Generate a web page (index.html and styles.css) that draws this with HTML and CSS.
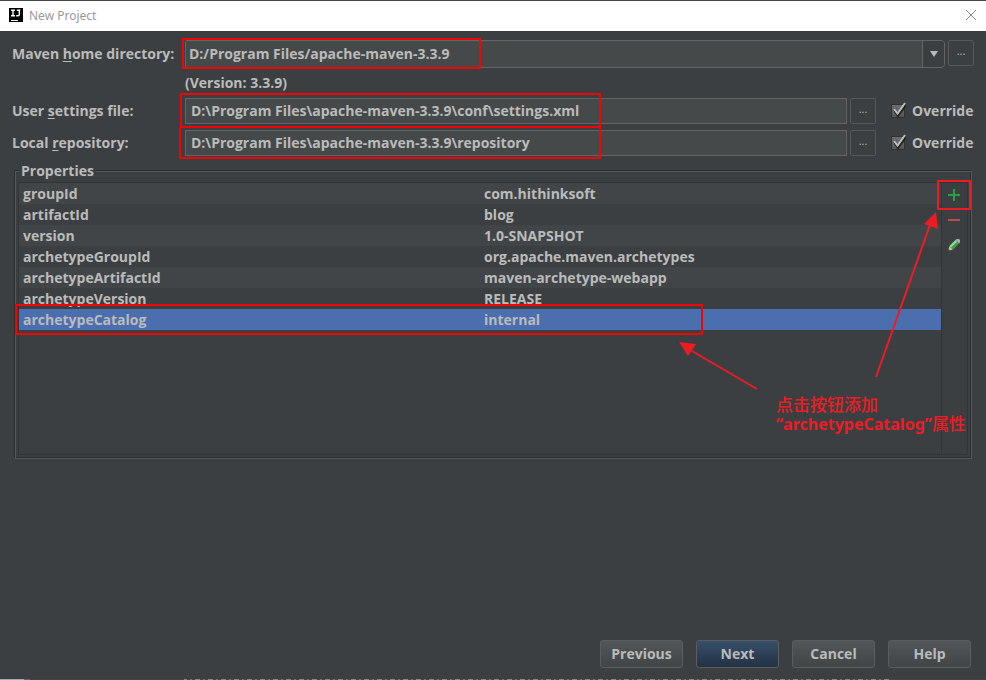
FILE: index.html
```html
<!DOCTYPE html>
<html lang="en">
<head>
<meta charset="utf-8">
<title>New Project</title>
<link rel="stylesheet" href="styles.css">
</head>
<body>
<div class="backdrop-top"></div>
<header class="titlebar">
  <svg class="logo" viewBox="0 0 14 14" width="14" height="14" aria-hidden="true">
    <path fill="#000" d="M0 0h14v14H0z"/>
    <path fill="none" stroke="#fff" stroke-width="1.4" d="M2 2.200h4M4 2v6M2 7.800h4M7.800 2.200h3.500M10.300 2v4.400q0 1.400-1.500 1.400H7.200"/>
    <path fill="#fff" d="M2 12h7v1H2z"/>
  </svg>
  <h1 class="title">New Project</h1>
  <button class="close" type="button" aria-label="Close">
    <svg viewBox="0 0 10 10" width="10" height="10"><path fill="none" stroke="#8a8a8a" d="M0 0l10 10M10 0L0 10"/></svg>
  </button>
</header>
<main class="dialog">
  <div class="form">
    <div class="row row-home">
      <label class="label" for="home">Maven <u>h</u>ome directory:</label>
      <div class="field marked mark-home">
        <select class="combo" id="home"><option>D:/Program Files/apache-maven-3.3.9</option></select>
        <span class="combo-arrow" aria-hidden="true"><svg viewBox="0 0 8 6" width="8" height="6"><path fill="#bbb" d="M0 0h8L4 6z"/></svg></span>
      </div>
      <button class="browse" type="button" aria-label="Browse home directory">...</button>
    </div>
    <p class="version">(Version: 3.3.9)</p>
    <div class="row">
      <label class="label" for="settings">User <u>s</u>ettings file:</label>
      <div class="field marked mark-settings"><input class="text" id="settings" type="text" value="D:\Program Files\apache-maven-3.3.9\conf\settings.xml"></div>
      <button class="browse" type="button" aria-label="Browse settings file">...</button>
      <label class="override"><input class="check" type="checkbox" checked><svg class="tick" viewBox="0 0 15 16" width="15" height="16" aria-hidden="true"><path fill="none" stroke="#222" stroke-width="2" d="M3 8l4 6 8-11"/><path fill="none" stroke="#bbb" stroke-width="2" d="M3 7l3.500 4.500L14 1"/></svg>Override</label>
    </div>
    <div class="row">
      <label class="label" for="repo">Local <u>r</u>epository:</label>
      <div class="field marked mark-repo"><input class="text" id="repo" type="text" value="D:\Program Files\apache-maven-3.3.9\repository"></div>
      <button class="browse" type="button" aria-label="Browse repository">...</button>
      <label class="override"><input class="check" type="checkbox" checked><svg class="tick" viewBox="0 0 15 16" width="15" height="16" aria-hidden="true"><path fill="none" stroke="#222" stroke-width="2" d="M3 8l4 6 8-11"/><path fill="none" stroke="#bbb" stroke-width="2" d="M3 7l3.500 4.500L14 1"/></svg>Override</label>
    </div>
  </div>
  <fieldset class="properties">
    <legend>Properties</legend>
    <div class="panel">
      <div class="list">
        <table class="table">
          <tbody>
            <tr><td>groupId</td><td>com.hithinksoft</td></tr>
            <tr><td>artifactId</td><td>blog</td></tr>
            <tr><td>version</td><td>1.0-SNAPSHOT</td></tr>
            <tr><td>archetypeGroupId</td><td>org.apache.maven.archetypes</td></tr>
            <tr><td>archetypeArtifactId</td><td>maven-archetype-webapp</td></tr>
            <tr><td>archetypeVersion</td><td>RELEASE</td></tr>
            <tr class="selected"><td>archetypeCatalog</td><td>internal</td></tr>
          </tbody>
        </table>
        <div class="mark-row"></div>
      </div>
      <div class="tools">
        <button class="tool tool-add" type="button" aria-label="Add"><svg viewBox="0 0 12 12" width="12" height="12"><path fill="#29a046" d="M5 0h2v5h5v2H7v5H5V7H0V5h5z"/></svg></button>
        <button class="tool" type="button" aria-label="Remove"><svg viewBox="0 0 12 12" width="12" height="12"><path fill="#bf4f43" d="M0 5h12v2H0z"/></svg></button>
        <button class="tool" type="button" aria-label="Edit"><svg viewBox="0 0 12 12" width="12" height="12"><path fill="#dfb67a" d="M0 12l1.500-5L5 10.500z"/><path fill="#333" d="M0 12l.6-2 1.400 1.400z"/><path fill="#3f9d50" d="M1.500 7L7.500 1l3.500 3.500-6 6z"/><path fill="#8fdc93" d="M1.500 7L7.500 1l1.600 1.600-6 6z"/><path fill="#a9aaa9" d="M7.500 1l1-1H11l1 1v2.500l-1 1z"/></svg></button>
      </div>
      <div class="note">
        <svg class="arrows" viewBox="0 0 300 190" width="300" height="190" aria-hidden="true">
          <g fill="none" stroke="#ed1c24" stroke-width="2"><path d="M85 177L20 139M204 165L259 10"/></g>
          <path fill="#ed1c24" d="M7 130l17 2-8 12zM264 0l-12 12 14 5z"/>
        </svg>
        <p class="note-text">点击按钮添加<br><b>“archetypeCatalog”</b>属性</p>
      </div>
    </div>
  </fieldset>
  <footer class="actions">
    <button class="action" type="button">Previous</button>
    <button class="action primary" type="button">Next</button>
    <button class="action" type="button">Cancel</button>
    <button class="action" type="button">Help</button>
  </footer>
</main>
<div class="backdrop-bottom"></div>
</body>
</html>
```
FILE: styles.css
```css
*, *::after { box-sizing: border-box; }

body {
  margin: 0;
  min-height: 100vh;
  display: flex;
  flex-direction: column;
  background: #3c3f41;
  color: #bbb;
  font: 700 14px/20px "Open Sans", "Noto Sans", sans-serif;
}

button, input, select { font: inherit; color: inherit; margin: 0; }
button { padding: 0; }
svg { display: block; }
u { text-decoration-thickness: 1px; text-underline-offset: 2px; }

.backdrop-top { height: 1px; background: #43454f; }
.backdrop-bottom {
  height: 1px;
  background: linear-gradient(90deg, #aaa 24px, #7b5d67 24px 30px, #454346 30px 184px, transparent 184px 890px, #454346 890px),
    repeating-linear-gradient(90deg, #8b8985 0 5px, #454346 5px 8px, #77736f 8px 10px, #454346 10px 13px);
}

.titlebar {
  height: 30px;
  display: flex;
  align-items: center;
  padding: 0 10px 2px 9px;
  background: #fff;
}
.title { margin: 0 0 0 6px; flex: 1; font: 400 12px/18px "Noto Sans", sans-serif; padding-top: 2px; color: #999; }
.close { border: 0; background: none; }

.dialog { flex: 1; display: flex; flex-direction: column; padding: 9px 12px 11px; }

.form { display: flex; flex-direction: column; }
.row { display: flex; margin-bottom: 6px; gap: 3px; }
.row-home { margin-bottom: 0; }
.label { width: 170px; line-height: 26px; white-space: nowrap; }
.row-home .label { line-height: 28px; }
.field { flex: 1; position: relative; }

.combo, .text {
  display: block;
  width: 100%;
  height: 26px;
  border: 1px solid #646464;
  background: #45494a;
  padding: 0 5px 2px;
  outline: 0;
}
.combo { height: 28px; appearance: none; border-radius: 2px 4px 4px 2px; padding: 0 24px 0 3px; }
.combo-arrow {
  position: absolute;
  top: 1px;
  right: 1px;
  bottom: 1px;
  width: 22px;
  display: grid;
  place-items: center;
  background: #3c3f41;
  border-left: 1px solid #646464;
  border-radius: 0 3px 3px 0;
  pointer-events: none;
}

.browse {
  width: 26px;
  height: 26px;
  border: 1px solid #56595b;
  border-radius: 2px;
  background: #3c3f41;
  font-size: 11px;
  font-weight: 400;
  line-height: 16px;
  padding-bottom: 5px;
}

.version { margin: 0; padding: 5px 0 5px 173px; }

.override { position: relative; display: flex; align-items: center; gap: 7px; margin-left: 12px; width: 83px; }
.check {
  appearance: none;
  width: 14px;
  height: 14px;
  background: linear-gradient(#6a6c6e, #54575a);
  border: 1px solid #2f3133;
  border-radius: 1px;
}
.tick { position: absolute; left: 0; top: 4px; }

.marked::after, .mark-row, .tool-add::after {
  content: "";
  position: absolute;
  border: 2px solid #f00505;
  border-radius: 1px;
  pointer-events: none;
}
.mark-home::after { left: -3px; top: -2px; width: 299px; height: 31px; }
.mark-settings::after { left: -5px; top: -5px; width: 421px; height: 35px; }
.mark-repo::after { left: -6px; top: -4px; width: 422px; height: 33px; }

.properties {
  margin: -1px 2px 0 3px;
  padding: 1px 3px 3px 2px;
  border: 1px solid #56595b;
  box-shadow: -1px -1px 0 #2b2d2e, inset -1px -1px 0 #2b2d2e;
  min-width: 0;
}
.properties legend { margin-left: 1px; padding: 0 2px; line-height: 20px; background: #3c3f41; }
.panel {
  position: relative;
  display: flex;
  height: 273px;
  border: 1px solid #323435;
}
.list { flex: 1; position: relative; }
.table { width: 100%; table-layout: fixed; border-collapse: collapse; }
.table td { height: 21px; padding: 0 4px; }
.table tr:nth-child(odd) { background: #414547; }
.table tr.selected { background: #4b6eaf; }
.mark-row { left: -4px; top: 121px; width: 688px; height: 31px; }

.tools {
  width: 26px;
  border-left: 1px solid #323435;
  display: flex;
  flex-direction: column;
}
.tool {
  position: relative;
  height: 25px;
  border: 0;
  background: none;
  display: grid;
  place-items: center;
  padding: 0 1px 1px 0;
}
.tool-add::after { left: -5px; right: -4px; top: -3px; height: 30px; border-color: #ed1c24; }

.note {
  position: absolute;
  top: 29px;
  right: -5px;
  width: 300px;
  pointer-events: none;
}
.note-text {
  margin: -7px 0 0 104px;
  color: #ed1c24;
  font: 500 17px/19px "Noto Sans", "Noto Sans CJK SC", sans-serif;
  white-space: nowrap;
}
.note-text b { font: 700 16px/19px "Noto Sans", sans-serif; }

.actions { margin-top: auto; display: flex; justify-content: flex-end; gap: 13px; padding-right: 3px; }
.action {
  width: 83px;
  height: 28px;
  border: 1px solid #5b5e60;
  border-radius: 3px;
  background: linear-gradient(#525658, #414546);
}
.primary { background: linear-gradient(#384f6b, #233144); }
```
